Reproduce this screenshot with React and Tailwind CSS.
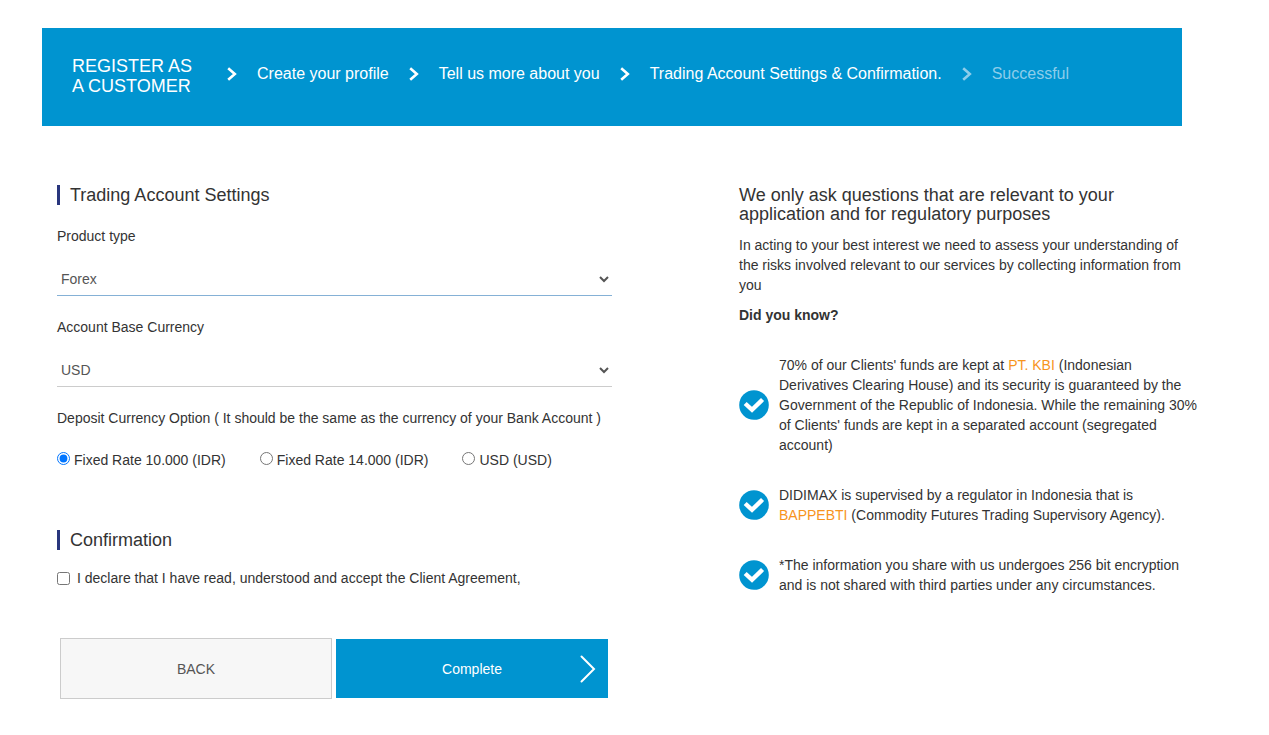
import React, { useState } from "react";

const classes = {
  page: "pt-7 pb-9 pr-[15px] font-['Liberation_Sans',Arial,sans-serif] text-sm leading-5 text-[#333]",
  container: "mx-auto max-w-[1170px]",
  header:
    "flex items-center max-w-[1140px] min-h-[98px] px-[30px] pb-0.5 bg-[#0094d0] text-base text-white",
  headerTitle: "mr-[35px] text-lg leading-5",
  steps: "flex items-center gap-5 pb-1",
  step: "flex items-center gap-5",
  columns: "flex justify-between px-[15px] pt-[58px]",
  form: "w-[49%] max-w-[555px]",
  sectionTitle: "border-l-3 border-[#29367d] pl-[10px] text-lg leading-5",
  field: "mt-[21px]",
  label: "block",
  select: "block w-full h-[34px] mt-4 bg-transparent border-b text-[#555] outline-none",
  radioLabel: "flex items-center gap-1",
  button: "w-[272px] cursor-pointer",
  aside: "w-[41%] max-w-[458px]",
  link: "text-[#f7941d]",
};

const steps = [
  { title: "Create your profile", active: true },
  { title: "Tell us more about you", active: true },
  { title: "Trading Account Settings & Confirmation.", active: true },
  { title: "Successful", active: false },
];

const rates = [
  "Fixed Rate 10.000 (IDR)",
  "Fixed Rate 14.000 (IDR)",
  "USD (USD)",
];

const StepArrow = () => (
  <svg width="10" height="14" viewBox="0 0 10 14" fill="none" aria-hidden="true">
    <path d="M1.2 1.3 7.8 7 1.2 12.7" stroke="currentColor" strokeWidth="2.6" />
  </svg>
);

const CheckIcon = () => (
  <svg
    className="shrink-0"
    width="30"
    height="30"
    viewBox="0 0 30 30"
    fill="none"
    aria-hidden="true"
  >
    <circle cx="15" cy="15" r="14.8" fill="#0094d0" />
    <path
      d="M7.8 15 13 19.8 22 11"
      stroke="white"
      strokeWidth="4.4"
      strokeLinecap="square"
    />
  </svg>
);

const Fact = ({ children }) => (
  <li className="flex items-center gap-[10px]">
    <CheckIcon />
    <p>{children}</p>
  </li>
);

const App = () => {
  const [rate, setRate] = useState(rates[0]);
  const [accepted, setAccepted] = useState(false);

  return (
    <div className={classes.page}>
      <div className={classes.container}>
        <header className={classes.header}>
          <h1 className={classes.headerTitle}>
            REGISTER AS
            <br />A CUSTOMER
          </h1>
          <ol className={classes.steps}>
            {steps.map((step) => (
              <li
                key={step.title}
                className={`${classes.step} ${step.active ? "" : "text-[#8dcdea]"}`}
              >
                <StepArrow />
                <span>{step.title}</span>
              </li>
            ))}
          </ol>
        </header>

        <div className={classes.columns}>
          <form className={classes.form} onSubmit={(e) => e.preventDefault()}>
            <h2 className={`${classes.sectionTitle} mt-px`}>
              Trading Account Settings
            </h2>

            <div className={classes.field}>
              <label htmlFor="product" className={classes.label}>
                Product type
              </label>
              <select
                id="product"
                className={`${classes.select} border-[#85b1d6]`}
              >
                <option>Forex</option>
              </select>
            </div>

            <div className={classes.field}>
              <label htmlFor="currency" className={classes.label}>
                Account Base Currency
              </label>
              <select
                id="currency"
                className={`${classes.select} border-[#ccc]`}
              >
                <option>USD</option>
              </select>
            </div>

            <fieldset className={classes.field}>
              <legend>
                Deposit Currency Option ( It should be the same as the currency
                of your Bank Account )
              </legend>
              <div className="flex flex-wrap gap-x-[34px] mt-[22px]">
                {rates.map((name) => (
                  <label key={name} className={classes.radioLabel}>
                    <input
                      type="radio"
                      name="rate"
                      className="size-[13px] mb-1"
                      checked={rate === name}
                      onChange={() => setRate(name)}
                    />
                    {name}
                  </label>
                ))}
              </div>
            </fieldset>

            <h2 className={`${classes.sectionTitle} mt-[60px]`}>
              Confirmation
            </h2>
            <label className="flex items-center gap-[7px] mt-[18px]">
              <input
                type="checkbox"
                className="size-[13px]"
                checked={accepted}
                onChange={(e) => setAccepted(e.target.checked)}
              />
              I declare that I have read, understood and accept the Client
              Agreement,
            </label>

            <div className="flex items-center gap-1 mt-[50px] pl-[3px]">
              <button
                type="button"
                className={`${classes.button} h-[61px] border border-[#ccc] bg-[#f7f7f7] text-[#555]`}
              >
                BACK
              </button>
              <button
                type="submit"
                className={`${classes.button} grid grid-cols-[1fr_auto_1fr] items-center h-[59px] bg-[#0094d0] text-white`}
              >
                <span className="col-start-2">Complete</span>
                <svg
                  className="justify-self-end mr-3"
                  width="16"
                  height="28"
                  viewBox="0 0 16 28"
                  fill="none"
                  aria-hidden="true"
                >
                  <path
                    d="M1.5 1.5 14 14 1.5 26.5"
                    stroke="currentColor"
                    strokeWidth="2"
                    strokeLinecap="round"
                  />
                </svg>
              </button>
            </div>
          </form>

          <aside className={classes.aside}>
            <h2 className="mt-0.5 text-lg leading-[19px]">
              We only ask questions that are relevant to your application and
              for regulatory purposes
            </h2>
            <p className="mt-[11px]">
              In acting to your best interest we need to assess your
              understanding of the risks involved relevant to our services by
              collecting information from you
            </p>
            <p className="mt-[10px] font-bold">Did you know?</p>
            <ul className="flex flex-col gap-[30px] mt-[30px]">
              <Fact>
                70% of our Clients' funds are kept at{" "}
                <a href="#kbi" className={classes.link}>
                  PT. KBI
                </a>{" "}
                (Indonesian Derivatives Clearing House) and its security is
                guaranteed by the Government of the Republic of Indonesia. While
                the remaining 30% of Clients' funds are kept in a separated
                account (segregated account)
              </Fact>
              <Fact>
                DIDIMAX is supervised by a regulator in Indonesia that is{" "}
                <a href="#bappebti" className={classes.link}>
                  BAPPEBTI
                </a>{" "}
                (Commodity Futures Trading Supervisory Agency).
              </Fact>
              <Fact>
                *The information you share with us undergoes 256 bit encryption
                and is not shared with third parties under any circumstances.
              </Fact>
            </ul>
          </aside>
        </div>
      </div>
    </div>
  );
};

export default App;
